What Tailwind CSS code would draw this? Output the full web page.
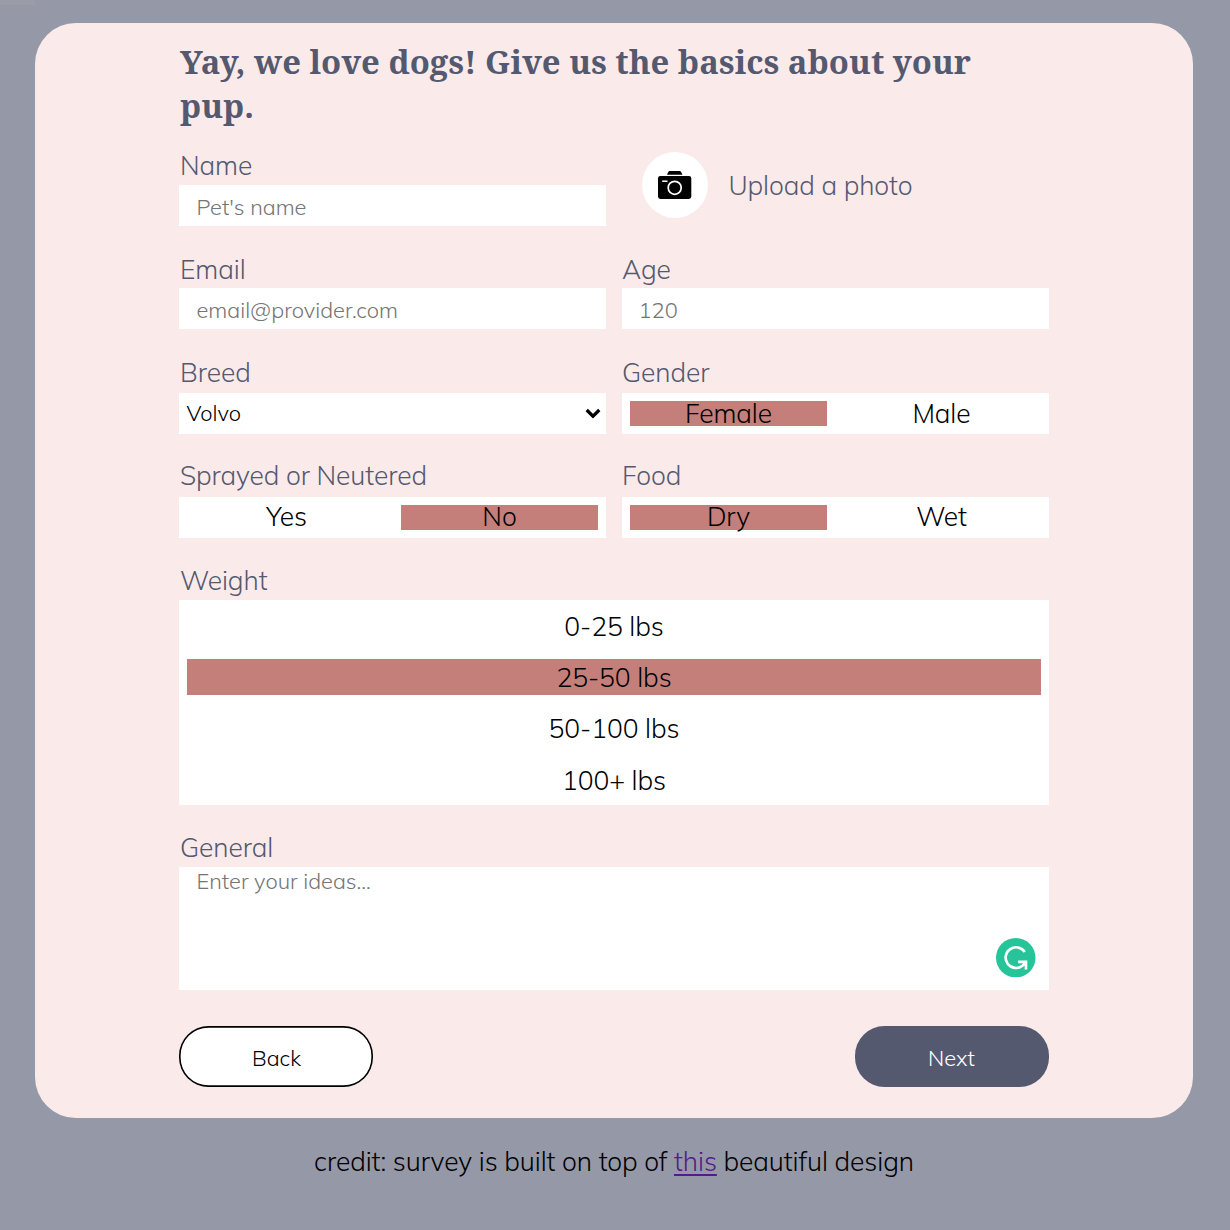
<!DOCTYPE html>
<html lang="en">
<head>
<meta charset="utf-8">
<title>Dog survey</title>
<script src="https://cdn.jsdelivr.net/npm/@tailwindcss/browser@4"></script>
</head>
<body class="relative h-[1230px] overflow-hidden bg-[#9598a6] font-[Mulish,Nunito,'Noto_Sans',sans-serif] text-[26.4px] leading-[33px] font-[350] tracking-[-0.08px] text-black">
<div class="absolute left-0 top-0 h-[5px] w-[35px] bg-[#9a9da6]"></div>
<div class="flex flex-col pt-[23px]">
<main class="ml-[35px] h-[1095px] w-[1158px] rounded-[41px] bg-[#faebea] pl-[144px] pr-[144px] pt-[17px] text-[#555970]">
  <h1 class="h-[108px] pl-px font-['Noto_Serif','DejaVu_Serif_Condensed',serif] text-[32.85px] leading-[44px] font-bold tracking-normal">Yay, we love dogs! Give us the basics about your pup.</h1>
  <form>
    <div class="grid grid-cols-2 gap-x-4 grid-rows-[103px_105px_104px_103px]">
      <label class="block"><span class="block h-[37px] pl-px pt-px">Name</span>
        <input class="block h-[41px] w-full bg-white pl-[17.5px] pt-[2px] text-[21.8px] tracking-normal text-black placeholder:text-[#757575]" placeholder="Pet's name"></label>
      <div class="flex items-start pl-5 pt-1">
        <span class="flex size-[66px] items-center justify-center rounded-full bg-white">
          <svg class="size-[66px]" viewBox="0 0 66 66"><path d="M25 22.8 26.4 19.8Q26.8 19 27.7 19H37.7Q38.6 19 39 19.8L40.5 22.8Z"/><rect x="16" y="24" width="33.3" height="23" rx="2.4"/><circle cx="32.7" cy="35.8" r="6.5" fill="none" stroke="#fff" stroke-width="1.7"/><path d="M20.2 29.2H25.5" stroke="#fff" stroke-width="1.5"/></svg>
        </span>
        <span class="ml-[20.5px] mt-[17px]">Upload a photo</span>
      </div>
      <label class="block"><span class="block h-[37px] pl-px pt-[2px]">Email</span>
        <input class="block h-[41px] w-full bg-white pl-[17.5px] pt-[2px] text-[21.8px] tracking-normal text-black placeholder:text-[#757575]" placeholder="email@provider.com"></label>
      <label class="block"><span class="block h-[37px] pt-[2px]">Age</span>
        <input class="block h-[41px] w-full bg-white pl-[16.5px] pt-[2px] text-[21.8px] tracking-normal text-black placeholder:text-[#757575]" placeholder="120"></label>
      <div><span class="block h-[37px] pl-px">Breed</span>
        <div class="flex h-[41px] items-center justify-between bg-white pl-[7.5px] pr-[5.5px] text-[21.8px] tracking-normal text-black"><span class="pb-[2px]">Volvo</span>
          <svg class="h-[11px] w-4" viewBox="0 0 16 11"><path d="M1.7 2 8 8.2 14.3 2" fill="none" stroke="#000" stroke-width="3.2"/></svg></div></div>
      <div><span class="block h-[37px]">Gender</span>
        <div class="flex h-[41px] gap-4 bg-white p-2 text-center leading-[25px] text-black"><span class="w-[197px] bg-[#c47f7b]">Female</span><span class="w-[197px]">Male</span></div></div>
      <div><span class="-mt-px block h-[38px] pl-px">Sprayed or Neutered</span>
        <div class="flex h-[41px] gap-4 bg-white p-2 text-center leading-[23px] text-black"><span class="flex-1 pl-px">Yes</span><span class="flex-1 bg-[#c47f7b]">No</span></div></div>
      <div><span class="-mt-px block h-[38px]">Food</span>
        <div class="flex h-[41px] gap-4 bg-white p-2 text-center leading-[23px] text-black"><span class="w-[197px] bg-[#c47f7b]">Dry</span><span class="w-[197px]">Wet</span></div></div>
    </div>
    <span class="block h-[37px] pl-px pt-px">Weight</span>
    <div class="grid h-[205px] grid-rows-4 gap-[15.5px] bg-white p-2 text-center leading-[37px] text-black">
      <span>0-25 lbs</span><span class="bg-[#c47f7b]">25-50 lbs</span><span>50-100 lbs</span><span class="pt-px">100+ lbs</span>
    </div>
    <span class="mt-[25px] block h-[37px] pl-px pt-px">General</span>
    <div class="relative">
      <textarea class="block h-[123px] w-full resize-none bg-white pl-[17.5px] text-[21.8px] leading-[28px] tracking-normal text-black placeholder:text-[#757575]" placeholder="Enter your ideas..."></textarea>
      <svg class="absolute right-[13.5px] top-[70.7px] size-[39.5px]" viewBox="0 0 118 118"><circle cx="59" cy="59" r="59" fill="#27c499"/><path d="M86 42A31 31 0 1 0 79 83L89 73M66 71.5H89.5V94" fill="none" stroke="#fff" stroke-width="8"/></svg>
    </div>
    <div class="mt-9 flex justify-between text-[21.8px] tracking-normal">
      <button type="button" class="h-[61px] w-[194px] rounded-[29.5px] bg-white pl-px pt-px text-black shadow-[inset_0_0_0_1.64px_#000]">Back</button>
      <button type="button" class="h-[61px] w-[194px] rounded-[29.5px] bg-[#555970] pt-px pr-px text-white">Next</button>
    </div>
  </form>
</main>
<p class="mt-[27px] w-[1228px] text-center">credit: survey is built on top of <a class="text-[#551a8b] underline decoration-[1.5px] underline-offset-[3px]">this</a> beautiful design</p>
</div>
</body>
</html>
